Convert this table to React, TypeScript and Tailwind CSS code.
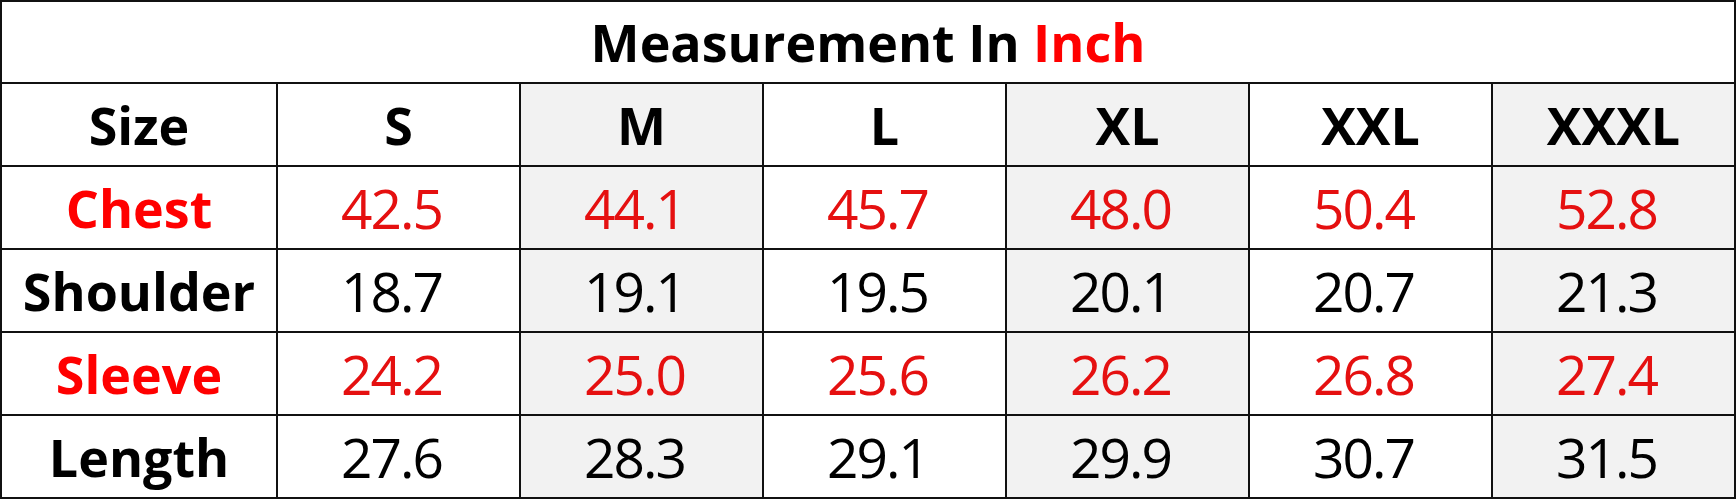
import React from 'react';

const sizes = ['S', 'M', 'L', 'XL', 'XXL', 'XXXL'];

const rows = [
  { label: 'Chest', red: true, values: ['42.5', '44.1', '45.7', '48.0', '50.4', '52.8'] },
  { label: 'Shoulder', red: false, values: ['18.7', '19.1', '19.5', '20.1', '20.7', '21.3'] },
  { label: 'Sleeve', red: true, values: ['24.2', '25.0', '25.6', '26.2', '26.8', '27.4'] },
  { label: 'Length', red: false, values: ['27.6', '28.3', '29.1', '29.9', '30.7', '31.5'] },
];

// shaded columns: M, XL, XXXL
const shade = (i: number) => (i % 2 === 1 ? 'bg-[#f2f2f2]' : 'bg-white');

const App: React.FC = () => {
  return (
    <div
      className="w-[1736px] h-[499px] bg-white"
      style={{ fontFamily: '"Open Sans", "Noto Sans", sans-serif' }}
    >
      <div className="grid grid-cols-[274px_repeat(6,241px)] grid-rows-[80px_repeat(5,81px)] gap-[2px] p-[2px] bg-[#111] w-[1736px] h-[499px]">
        {/* Title */}
        <div className="col-span-7 bg-white flex items-center justify-center text-[52px] font-bold text-black leading-none">
          Measurement In&nbsp;<span className="text-[#ff0000]">Inch</span>
        </div>

        {/* Header */}
        <div className="bg-white flex items-center justify-center text-[52px] font-bold text-black leading-none">
          Size
        </div>
        {sizes.map((s, i) => (
          <div
            key={s}
            className={`${shade(i)} flex items-center justify-center text-[52px] font-bold text-black leading-none`}
          >
            {s}
          </div>
        ))}

        {/* Measurements */}
        {rows.map((row) => (
          <React.Fragment key={row.label}>
            <div
              className={`bg-white flex items-center justify-center text-[52px] font-bold leading-none ${
                row.red ? 'text-[#ff0000]' : 'text-black'
              }`}
            >
              {row.label}
            </div>
            {row.values.map((v, i) => (
              <div
                key={i}
                className={`${shade(i)} flex items-center justify-center pr-[14px] text-[55px] tracking-[-2px] leading-none ${
                  row.red ? 'text-[#e51010]' : 'text-black'
                }`}
              >
                {v}
              </div>
            ))}
          </React.Fragment>
        ))}
      </div>
    </div>
  );
};

export default App;
